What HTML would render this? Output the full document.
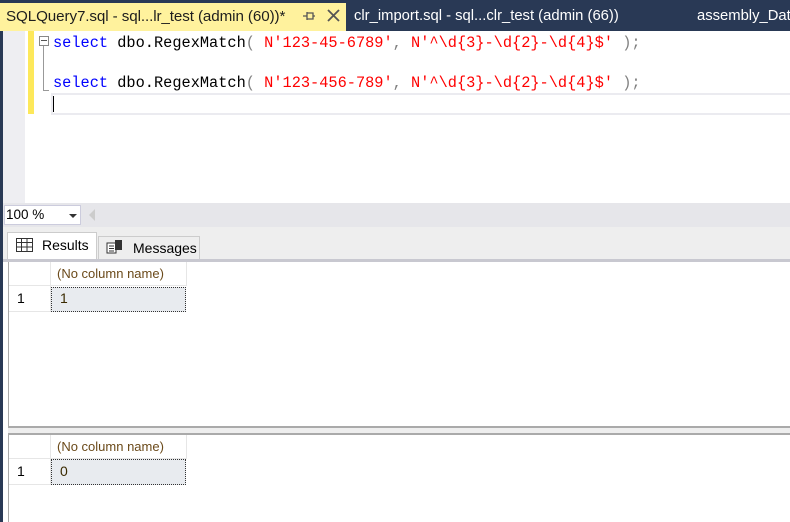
<!DOCTYPE html>
<html><head><meta charset="utf-8"><style>
*{margin:0;padding:0;box-sizing:border-box}
body{width:790px;height:522px;overflow:hidden;background:#fff;font-family:"Liberation Sans",sans-serif;position:relative}
.abs{position:absolute}
.code{font-family:"Liberation Mono",monospace;font-size:15.3px;white-space:pre;color:#000}
.k{color:#0000ff}.s{color:#ff0000}.g{color:#808080}
.hdr{font-size:13px;color:#6b4a1a}
</style></head><body>
<div class="abs" style="left:0;top:0;width:790px;height:31px;background:#293955"></div>
<div class="abs" style="left:0;top:3px;width:346px;height:28px;background:#fff29d"></div>
<div class="abs" style="left:6px;top:8px;font-size:15.2px;color:#1e1e1e;letter-spacing:-0.1px">SQLQuery7.sql - sql...lr_test (admin (60))*</div>
<svg class="abs" style="left:302px;top:10px" width="14" height="12"><path d="M1 6H5M5 2V10M5 3H11V9H5M11 6H13" stroke="#555" fill="none" stroke-width="1.3"/></svg>
<svg class="abs" style="left:327px;top:9px" width="13" height="13"><path d="M1 1L12 12M12 1L1 12" stroke="#555" stroke-width="1.8"/></svg>
<div class="abs" style="left:354px;top:8px;font-size:14.8px;color:#fff">clr_import.sql - sql...clr_test (admin (66))</div>
<div class="abs" style="left:697px;top:8px;font-size:14.8px;color:#fff">assembly_Dat</div>
<div class="abs" style="left:0;top:31px;width:3px;height:491px;background:#293955"></div>
<div class="abs" style="left:3px;top:31px;width:22px;height:172px;background:#eeeef2"></div>
<div class="abs" style="left:28px;top:31px;width:6px;height:83px;background:#fde85a"></div>
<div class="abs" style="left:39px;top:36px;width:10px;height:10px;border:1px solid #888;background:#fff"></div>
<div class="abs" style="left:41px;top:40px;width:6px;height:1px;background:#555"></div>
<div class="abs" style="left:43px;top:46px;width:1px;height:45px;background:#999"></div>
<div class="abs" style="left:43px;top:90px;width:6px;height:1px;background:#999"></div>
<div class="abs code" style="left:53px;top:34px"><span class="k">select</span> dbo.RegexMatch<span class="g">(</span> <span class="s">N'123-45-6789'</span><span class="g">,</span> <span class="s">N'^\d{3}-\d{2}-\d{4}$'</span> <span class="g">);</span></div>
<div class="abs code" style="left:53px;top:74px"><span class="k">select</span> dbo.RegexMatch<span class="g">(</span> <span class="s">N'123-456-789'</span><span class="g">,</span> <span class="s">N'^\d{3}-\d{2}-\d{4}$'</span> <span class="g">);</span></div>
<div class="abs" style="left:51px;top:93px;width:739px;height:22px;border:2px solid #ebebf0;border-right:none"></div>
<div class="abs" style="left:53px;top:96px;width:1px;height:16px;background:#000"></div>
<div class="abs" style="left:3px;top:203px;width:787px;height:24px;background:#e6e6ea"></div>
<div class="abs" style="left:4px;top:205px;width:77px;height:20px;background:#fff;border:1px solid #ccd"></div>
<div class="abs" style="left:6px;top:207px;font-size:13.5px">100 %</div>
<div class="abs" style="left:69px;top:214px;border-left:4px solid transparent;border-right:4px solid transparent;border-top:4px solid #333"></div>
<div class="abs" style="left:89px;top:209px;border-top:6px solid transparent;border-bottom:6px solid transparent;border-right:6px solid #ccc"></div>
<div class="abs" style="left:3px;top:227px;width:787px;height:33px;background:#eeeeee"></div>
<div class="abs" style="left:7px;top:232px;width:90px;height:30px;background:#fff;border:1px solid #ccc;border-bottom:none"></div>
<svg class="abs" style="left:16px;top:238px" width="17" height="14"><rect x=".5" y=".5" width="16" height="13" fill="#fff" stroke="#333"/><path d="M0 4.5H17M0 9H17M5.5 0V14M11 0V14" stroke="#333"/></svg>
<div class="abs" style="left:42px;top:237px;font-size:14px">Results</div>
<div class="abs" style="left:98px;top:236px;width:102px;height:26px;background:#eee;border:1px solid #ccc;border-bottom:none"></div>
<svg class="abs" style="left:106px;top:239px" width="18" height="15"><rect x="1" y="4" width="9" height="10" fill="#fff" stroke="#333"/><rect x="9" y="1" width="7" height="10" fill="#333"/><path d="M3 7H8M3 9.5H8M3 12H8" stroke="#333"/></svg>
<div class="abs" style="left:133px;top:240px;font-size:14px">Messages</div>
<div class="abs" style="left:3px;top:259px;width:787px;height:3px;background:#c8c8d0"></div>
<div class="abs" style="left:8px;top:262px;width:782px;height:166px;border-left:1px solid #aaa;border-bottom:2px solid #aaa;background:#fff"></div>
<div class="abs" style="left:8px;top:428px;width:782px;height:5px;background:#eee"></div>
<div class="abs" style="left:8px;top:433px;width:782px;height:89px;border-left:1px solid #aaa;border-top:2px solid #aaa;background:#fff"></div>
<div class="abs" style="left:9px;top:262px;width:177px;height:24px;border-bottom:1px solid #e6e6e6"></div>
<div class="abs" style="left:50px;top:262px;width:1px;height:50px;background:#e6e6e6"></div>
<div class="abs" style="left:186px;top:262px;width:1px;height:24px;background:#e6e6e6"></div>
<div class="abs hdr" style="left:57px;top:266px">(No column name)</div>
<div class="abs" style="left:9px;top:311px;width:42px;height:1px;background:#e6e6e6"></div>
<div class="abs" style="left:17px;top:290px;font-size:14px">1</div>
<div class="abs" style="left:51px;top:287px;width:135px;height:25px;background:#e8ebef;border:1px dotted #333"></div>
<div class="abs" style="left:60px;top:290px;font-size:14px;color:#3a2a00">1</div>
<div class="abs" style="left:9px;top:435px;width:177px;height:24px;border-bottom:1px solid #e6e6e6"></div>
<div class="abs" style="left:50px;top:435px;width:1px;height:50px;background:#e6e6e6"></div>
<div class="abs" style="left:186px;top:435px;width:1px;height:24px;background:#e6e6e6"></div>
<div class="abs hdr" style="left:57px;top:439px">(No column name)</div>
<div class="abs" style="left:9px;top:484px;width:42px;height:1px;background:#e6e6e6"></div>
<div class="abs" style="left:17px;top:463px;font-size:14px">1</div>
<div class="abs" style="left:51px;top:459px;width:135px;height:26px;background:#e8ebef;border:1px dotted #333"></div>
<div class="abs" style="left:60px;top:463px;font-size:14px;color:#3a2a00">0</div>
</body></html>
